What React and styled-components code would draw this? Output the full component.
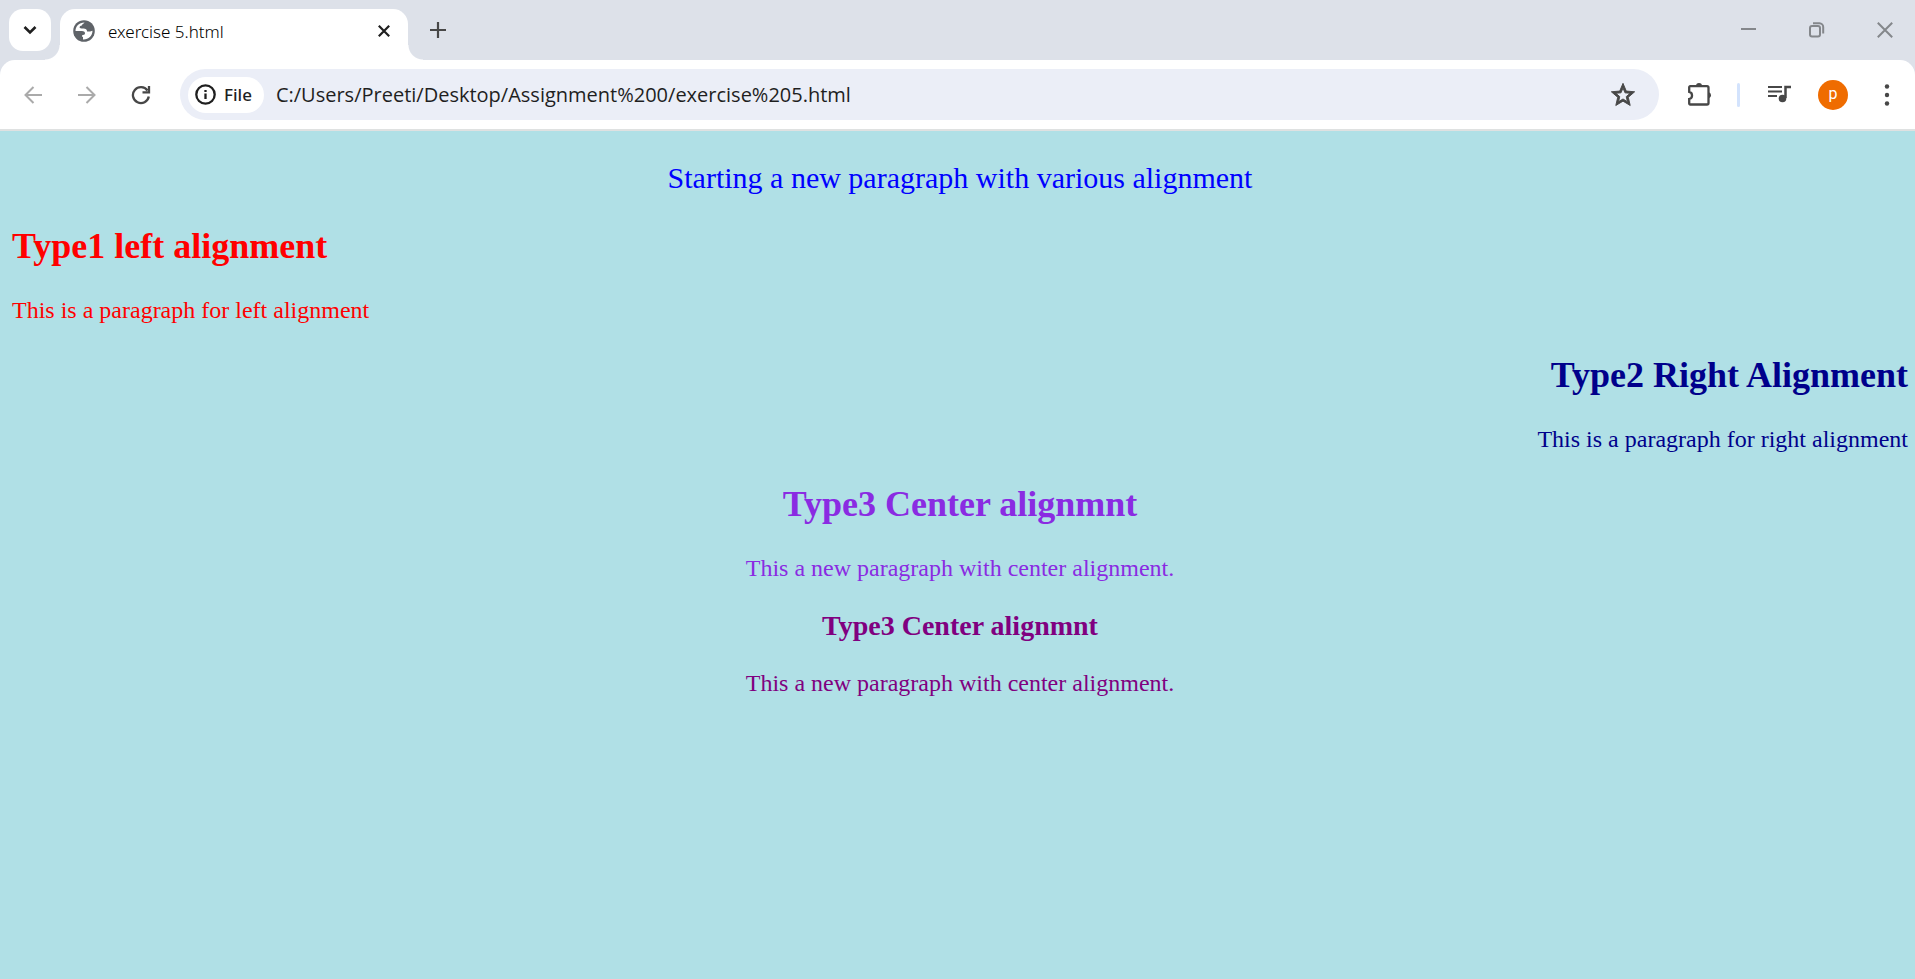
import React from "react";
import styled, { createGlobalStyle } from "styled-components";

const UI_FONT = '"Open Sans", "Noto Sans", sans-serif';

const GlobalStyle = createGlobalStyle`
  * { box-sizing: border-box; }
  html, body { margin: 0; }
  body {
    min-height: 100vh;
    background: #b0e0e6;
    font-family: "Liberation Serif", "Times New Roman", serif;
  }
  button { border: 0; padding: 0; background: none; color: inherit; font: inherit; }
`;

const TabStrip = styled.header`
  display: flex;
  align-items: center;
  height: 60px;
  padding: 0 1px 0 9px;
  background: #dde1e9;
  font-family: ${UI_FONT};
`;

const TabSearch = styled.button`
  display: grid;
  place-items: center;
  width: 42px;
  height: 42px;
  border-radius: 14px;
  background: #fff;
  color: #1f1f1f;
`;

const Tab = styled.div`
  position: relative;
  display: flex;
  align-items: center;
  align-self: flex-end;
  gap: 12px;
  width: 348px;
  height: 51px;
  margin: 0 12px 0 9px;
  padding: 0 12px 8px;
  border-radius: 15px 15px 0 0;
  background: #fff;
  color: #1f1f1f;

  &::before,
  &::after {
    content: "";
    position: absolute;
    bottom: 0;
    width: 15px;
    height: 15px;
  }
  &::before {
    right: 100%;
    background: radial-gradient(circle at 0 0, transparent 14px, #fff 15px);
  }
  &::after {
    left: 100%;
    background: radial-gradient(circle at 100% 0, transparent 14px, #fff 15px);
  }
`;

const TabTitle = styled.span`
  flex: 1;
  color: #000;
  font-family: "Noto Sans", sans-serif;
  font-weight: 300;
  font-size: 17px;
  line-height: 24px;
  padding-top: 2px;
`;

const IconButton = styled.button`
  display: grid;
  place-items: center;
  width: ${(p) => p.$width || 54}px;
  height: 42px;
  color: ${(p) => p.$color || "#474747"};
`;

const WindowControls = styled.div`
  display: flex;
  gap: 10px;
  margin-left: auto;
`;

const ToolbarBack = styled.div`
  background: #dde1e9;
`;

const Toolbar = styled.nav`
  display: flex;
  align-items: center;
  height: 71px;
  padding: 0 1px 0 6px;
  border-bottom: 2px solid #dfe1e1;
  border-radius: 15px 15px 0 0;
  background: #fff;
  font-family: ${UI_FONT};
`;

const Omnibox = styled.div`
  display: flex;
  flex: 1;
  align-items: center;
  gap: 12px;
  height: 51px;
  margin: 0 14px 0 12px;
  padding: 0 9px 0 8px;
  border-radius: 26px;
  background: #ebeef7;
`;

const SchemeChip = styled.button`
  display: flex;
  align-items: center;
  gap: 8px;
  height: 36px;
  padding: 0 12px 0 7px;
  border-radius: 18px;
  background: #fff;
  color: #1f1f1f;
  font-family: "Noto Sans", sans-serif;
  font-size: 17px;
  font-weight: 500;
  line-height: 24px;
`;

const Address = styled.input`
  flex: 1;
  min-width: 0;
  height: 36px;
  padding: 0;
  border: 0;
  outline: 0;
  background: none;
  color: #1f1f1f;
  font-family: ${UI_FONT};
  font-size: 20px;
`;

const Divider = styled.span`
  width: 3px;
  height: 24px;
  margin: 0 12px 0 10px;
  border-radius: 2px;
  background: #d3e3fd;
`;

const Avatar = styled.span`
  display: grid;
  place-items: center;
  width: 30px;
  height: 30px;
  border-radius: 50%;
  background: #ef6c00;
  color: #fff;
  font-family: Roboto, sans-serif;
  font-size: 16px;
  line-height: 24px;
  padding-bottom: 2px;
`;

const Page = styled.main`
  display: flow-root;
  padding: 0 7px 0 12px;
`;

const Intro = styled.p`
  margin: 30px 0;
  color: #0000ff;
  font-size: 30px;
  line-height: 34px;
  text-align: center;
`;

const Section = styled.section`
  color: ${(p) => p.$color};
  text-align: ${(p) => p.$align};
`;

const Heading = styled.h2`
  margin: 31px 0 29px;
  font-size: 36px;
  line-height: 41px;
`;

const SubHeading = styled.h3`
  margin: 28px 0;
  font-size: 28px;
  line-height: 31px;
`;

const Text = styled.p`
  margin: 24px 0;
  font-size: 24px;
  line-height: 28px;
`;

function Icon({ w = 24, h = w, box = `0 0 ${w} ${h}`, stroke = 2, children }) {
  return (
    <svg width={w} height={h} viewBox={box} fill="none" stroke="currentColor" strokeWidth={stroke} aria-hidden="true">
      {children}
    </svg>
  );
}

function Browser() {
  return (
    <>
      <TabStrip>
        <TabSearch aria-label="Search tabs">
          <Icon w={14} stroke={2.6}><path d="M1.500 4 7 9.500 12.500 4" /></Icon>
        </TabSearch>
        <Tab>
          <Icon w={24}>
            <circle cx="12" cy="12" r="10.800" fill="#5f6368" stroke="none" />
            <path
              fill="#fff"
              stroke="none"
              d="M3.500 12C3.500 7 7 3.600 12.500 3.400c-.4 1-2.300 1.400-2.300 2.400 0 1.100-2.600 1-2.600 2.400 0 1.400 2 1.300 4 1.300s3.500 1 3.500 3h2.500c1 0 1.600-.8 2.900-.8C20.500 17 16 20.800 11 20.400v-2.500c-1.200 0-1.500-2 0-2s2-1 2-2-1.500-1.900-3-1.900z"
            />
          </Icon>
          <TabTitle>exercise 5.html</TabTitle>
          <IconButton $width={24} $color="#1f1f1f" aria-label="Close tab">
            <Icon w={12} stroke={2.2}><path d="M.8.8l10.400 10.400M11.200.8.8 11.200" /></Icon>
          </IconButton>
        </Tab>
        <IconButton $width={36} aria-label="New tab">
          <Icon w={16} stroke={2.2}><path d="M8 0v16M0 8h16" /></Icon>
        </IconButton>
        <WindowControls>
          <IconButton $width={58} $color="#84878b" aria-label="Minimize">
            <Icon w={16} stroke={2}><path d="M0 7h15" /></Icon>
          </IconButton>
          <IconButton $width={58} $color="#84878b" aria-label="Restore">
            <Icon w={16} stroke={2}>
              <rect x="1" y="4" width="10" height="10.500" rx="2" />
              <path d="M4 1.200h6.500A3.800 3.800 0 0 1 14.200 5v6.500" />
            </Icon>
          </IconButton>
          <IconButton $width={58} $color="#84878b" aria-label="Close window">
            <Icon w={16} stroke={2}><path d="M.8.8l14.400 14.400M15.200.8.8 15.200" /></Icon>
          </IconButton>
        </WindowControls>
      </TabStrip>
      <ToolbarBack>
        <Toolbar>
          <IconButton $color="#aaaaaa" aria-label="Back">
            <Icon w={18}><path d="M18 9H1.500M9.500 1 1.500 9l8 8" /></Icon>
          </IconButton>
          <IconButton $color="#aaaaaa" aria-label="Forward">
            <Icon w={18}><path d="M0 9h16.500M8.500 1l8 8-8 8" /></Icon>
          </IconButton>
          <IconButton aria-label="Reload">
            <Icon w={20} stroke={2.3}>
              <path d="M16.500 5.500A8 8 0 1 0 17.800 11.500M18 1v6.300h-6.500" />
            </Icon>
          </IconButton>
          <Omnibox>
            <SchemeChip>
              <Icon w={21} stroke={2.3}>
                <circle cx="10.500" cy="10.500" r="9.200" />
                <path d="M10.500 9.500v5.500M10.500 6v2" />
              </Icon>
              File
            </SchemeChip>
            <Address aria-label="Address" defaultValue="C:/Users/Preeti/Desktop/Assignment%200/exercise%205.html" />
            <IconButton aria-label="Bookmark this page">
              <Icon w={28} box="0 0 24 24" stroke={0.8}>
                <path
                  fill="currentColor"
                  d="M22 9.240l-7.190-.62L12 2 9.190 8.630 2 9.240l5.460 4.730L5.820 21 12 17.270 18.180 21l-1.630-7.030L22 9.240zM12 15.400l-3.760 2.270 1-4.280-3.320-2.880 4.380-.38L12 6.100l1.710 4.040 4.380.38-3.320 2.880 1 4.280L12 15.400z"
                />
              </Icon>
            </IconButton>
          </Omnibox>
          <IconButton aria-label="Extensions">
            <Icon w={26} stroke={2.3}>
              <path d="M3.200 4.200H20a1.500 1.500 0 0 1 1.500 1.500V21a1.500 1.500 0 0 1-1.500 1.500H3.200a1 1 0 0 1-1-1V17a3.700 3.700 0 0 0 0-7.200V5.200a1 1 0 0 1 1-1z" />
              <path fill="currentColor" stroke="none" d="M9 4a3 3 0 0 1 6 0zM21.500 10a3.400 3.400 0 0 1 0 6.600z" />
            </Icon>
          </IconButton>
          <Divider />
          <IconButton aria-label="Media controls">
            <Icon w={24} h={20} stroke={2}>
              <path d="M1 2h14M1 6.500h14M1 11h9" />
              <path d="M18.500 13V2H24" strokeWidth="2.500" />
              <circle cx="15.500" cy="13.500" r="3.800" fill="currentColor" stroke="none" />
            </Icon>
          </IconButton>
          <IconButton aria-label="Profile">
            <Avatar>p</Avatar>
          </IconButton>
          <IconButton aria-label="Menu">
            <Icon w={6} h={22}>
              <g fill="currentColor" stroke="none">
                <circle cx="3" cy="2.500" r="2.200" />
                <circle cx="3" cy="11" r="2.200" />
                <circle cx="3" cy="19.500" r="2.200" />
              </g>
            </Icon>
          </IconButton>
        </Toolbar>
      </ToolbarBack>
    </>
  );
}

export default function App() {
  return (
    <>
      <GlobalStyle />
      <Browser />
      <Page>
        <Intro>Starting a new paragraph with various alignment</Intro>
        <Section $color="#ff0000" $align="left">
          <Heading>Type1 left alignment</Heading>
          <Text>This is a paragraph for left alignment</Text>
        </Section>
        <Section $color="#00008b" $align="right">
          <Heading>Type2 Right Alignment</Heading>
          <Text>This is a paragraph for right alignment</Text>
        </Section>
        <Section $color="#8a2be2" $align="center">
          <Heading>Type3 Center alignmnt</Heading>
          <Text>This a new paragraph with center alignment.</Text>
        </Section>
        <Section $color="#800080" $align="center">
          <SubHeading>Type3 Center alignmnt</SubHeading>
          <Text>This a new paragraph with center alignment.</Text>
        </Section>
      </Page>
    </>
  );
}
